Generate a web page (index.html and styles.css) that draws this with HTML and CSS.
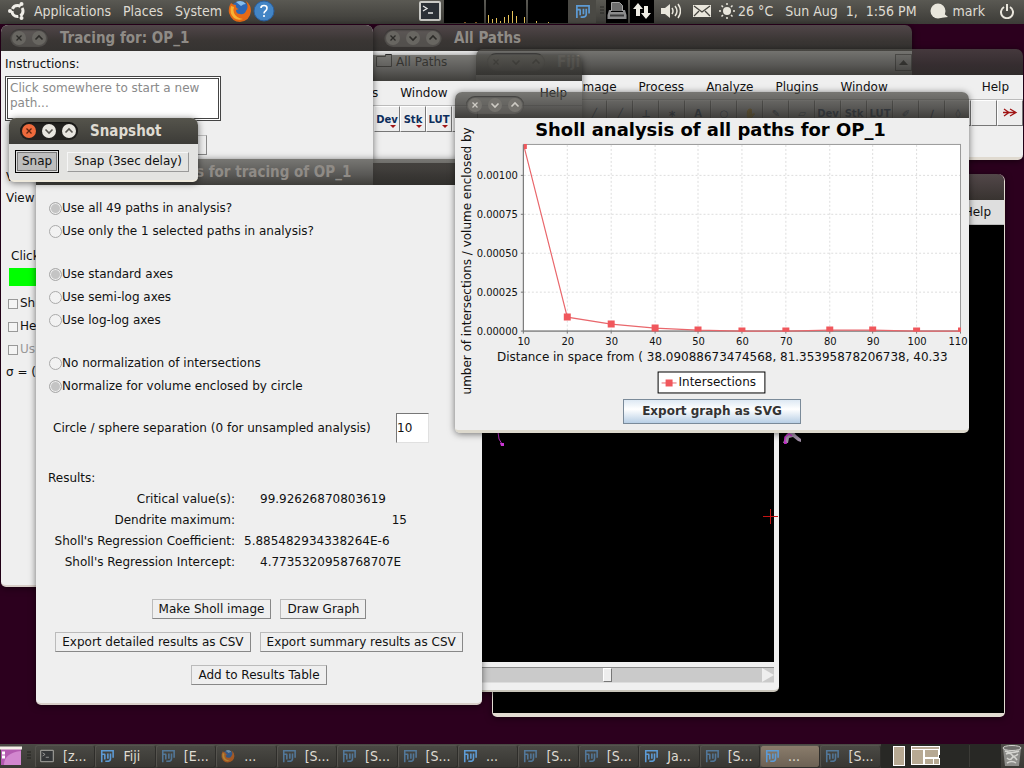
FILE: index.html
```html
<!DOCTYPE html>
<html lang="en">
<head>
<meta charset="utf-8">
<title>Sholl analysis desktop</title>
<link rel="stylesheet" href="styles.css">
</head>
<body>
<svg class="defs" aria-hidden="true">
  <symbol id="fiji" viewBox="0 0 16 16"><g fill="none" stroke="currentColor" stroke-width="1.800"><path d="M2 15V2H15V10"/><path d="M2 6H6M5.500 6V12M9 5V11M12 5V11Q12 14 8 14H6"/></g></symbol>
  <symbol id="x" viewBox="0 0 14 14"><path d="M4.500 4.500l5 5M9.500 4.500l-5 5" fill="none" stroke="currentColor" stroke-width="1.300"/></symbol>
  <symbol id="dn" viewBox="0 0 14 14"><path d="M3.500 5.500L7 9l3.500-3.500" fill="none" stroke="currentColor" stroke-width="1.600"/></symbol>
  <symbol id="up" viewBox="0 0 14 14"><path d="M3.500 8.500L7 5l3.500 3.500" fill="none" stroke="currentColor" stroke-width="1.600"/></symbol>
  <symbol id="term" viewBox="0 0 22 20"><rect x="1" y="1" width="20" height="18" rx="1" fill="#2b3036" stroke="#c9c9c5" stroke-width="2"/><path d="M4 5l4 2.500-4 2.500M9 12h5" fill="none" stroke="#e8e8e8" stroke-width="1.300"/></symbol>
  <symbol id="ff" viewBox="0 0 24 24"><circle cx="12" cy="11" r="9" fill="#2d67b5"/><path d="M8 3q6-3 10 2q-3 0-5 2z" fill="#86bdec"/><path d="M3 4Q0 9 1 14Q4 23 12 23Q22 22 23 12Q23 6 18 2Q21 8 18 12Q16 16 12 15Q8 15 8 11L11 10Q7 9 8 6Q5 6 3 4z" fill="#e66a16"/><path d="M3 7Q1 14 6 19Q10 22 15 20Q8 19 6 14Q5 10 6 8z" fill="#f9b233"/></symbol>
</svg>

<header class="panel">
  <nav class="menus">
    <svg class="ubuntu" viewBox="0 0 18 18"><circle cx="9.500" cy="9" r="5.500" fill="none" stroke="#f0eee8" stroke-width="3" stroke-dasharray="9.500 2" stroke-dashoffset="4"/><g fill="#f0eee8"><circle cx="2" cy="9" r="2"/><circle cx="13.500" cy="2" r="2"/><circle cx="13.500" cy="16" r="2"/></g></svg>
    <a href="#">Applications</a><a href="#">Places</a><a href="#">System</a>
    <svg class="launch" viewBox="0 0 24 24"><use href="#ff"/></svg>
    <svg class="launch help" viewBox="0 0 22 22"><circle cx="11" cy="11" r="10" fill="#4385c5" stroke="#2a5f9e"/><path d="M8 8Q8 5.500 11 5.500T14 8Q14 10 12.500 11T11 13.500M11 15v2" fill="none" stroke="#fff" stroke-width="1.600"/></svg>
  </nav>
  <div class="tray">
    <svg width="22" height="20"><use href="#term"/></svg>
    <svg class="monitor" viewBox="0 0 124 23"><path d="M0 0h40v23h-40zM42 0h40v23h-40zM84 0h40v23h-40z" fill="#000"/><path d="M44.500 23V15M48.500 23V19M52.500 23V18M56.500 23V21M60.500 23V17M64.500 23V15M68.500 23V11M72.500 23V16M80.500 23V17M92.500 23V21M104.500 23V22" stroke="#e7c35a"/><path d="M20 22.500h2M31 22.500h2" stroke="#875a24"/></svg>
    <span class="applet"><svg width="15" height="15"><use href="#fiji"/></svg></span>
    <svg width="8" height="10" viewBox="0 0 8 10"><path d="M2 1h4M2 4h4M2 7h4" stroke="#2b2a27" stroke-width="1"/></svg>
    <svg class="dark" width="22" height="24" viewBox="0 0 22 24"><path d="M5.500 12V3.500h8l3 3V12" fill="#6d6d6d" stroke="#a5a5a5"/><path d="M3 11h2v2h12v-2h2l1.500 5v4h-19v-4z" fill="#8c8c8c"/><path d="M4 16.500h14" stroke="#3a3a3a" stroke-width="2"/></svg>
    <svg class="dark" width="24" height="24" viewBox="0 0 24 24"><path d="M8 4l5 6h-3v7H6v-7H3zM16 20l-5-6h3V7h4v7h3z" fill="#eeece4"/></svg>
    <svg class="speaker" width="21" height="20" viewBox="0 0 21 20"><path d="M1 7h4l5-4v14l-5-4H1z" fill="#e9e6dc"/><path d="M12 7q2 3 0 6M15 5q4 5 0 10M18 3q5 7 0 14" fill="none" stroke="#e9e6dc" stroke-width="1.500"/></svg>
    <svg class="mail" width="18" height="14" viewBox="0 0 18 14"><path d="M0 1h18v12H0z" fill="#e9e6dc"/><path d="M1 2l8 6 8-6M1 12l5-5M17 12l-5-5" fill="none" stroke="#45443f" stroke-width="1.300"/></svg>
    <svg class="sun" width="16" height="16" viewBox="0 0 16 16"><circle cx="8" cy="8" r="4" fill="#e9e6dc"/><path d="M8 0v2M8 14v2M0 8h2M14 8h2M2.500 2.500l1.500 1.500M12 12l1.500 1.500M2.500 13.500L4 12M12 4l1.500-1.500" stroke="#e9e6dc" stroke-width="1.500"/></svg>
    <span class="temp">26 °C</span><time>Sun Aug&nbsp; 1,&nbsp; 1:56 PM</time>
    <svg width="18" height="16" viewBox="0 0 18 16"><circle cx="8" cy="8" r="7.500" fill="#e9e6dc"/><path d="M12 9l6 5-8 1z" fill="#e9e6dc"/></svg>
    <span class="user">mark</span>
    <svg width="14" height="16" viewBox="0 0 14 16"><path d="M4 4a6 6 0 1 0 6 0M7 1v7" fill="none" stroke="#e9e6dc" stroke-width="2"/></svg>
  </div>
</header>

<main class="desktop">
  <section class="win w-image">
    <div class="bar"></div>
    <nav class="menubar end"><a href="#">Help</a></nav>
    <div class="black"><svg class="neurite" viewBox="0 0 22 16"><path d="M1 12l3-8 4-4h3l3 4 5 4v3l-3-1-5-4-4 1-1 5z" fill="#a08fa6"/><path d="M3 13V6l4-3 3 2M2 12h3" stroke="#c92bd0" stroke-width="1.500" fill="none"/></svg></div>
  </section>

  <section class="win w-canvas">
    <div class="bar"></div>
    <div class="black">
      <svg class="tail" viewBox="0 0 10 16"><path d="M2 0q0 8 4 12" stroke="#b62bc0" fill="none"/><path d="M4 11h4v3H5z" fill="#c936d2"/></svg>
      <svg class="cross" viewBox="0 0 15 15"><path d="M7.500 0v15M0 7.500h15" stroke="#c41414"/></svg>
    </div>
    <div class="scroll"><span class="thumb"></span><button class="arrow" aria-label="Scroll right"></button></div>
  </section>

  <section class="win w-paths">
    <div class="bar"><span class="ctl"><button aria-label="Close"><svg><use href="#x"/></svg></button><button aria-label="Minimize"><svg><use href="#dn"/></svg></button><button aria-label="Maximize"><svg><use href="#up"/></svg></button></span><h2>All Paths</h2></div>
    <div class="tree"><svg width="16" height="13" viewBox="0 0 16 13"><path d="M.5 12.500v-10h9v-2h6v12z" fill="none" stroke="#333"/></svg><span>All Paths</span><button class="sbtn" aria-label="Scroll up"><svg width="9" height="5" viewBox="0 0 9 5"><path d="M0 5l4.500-5L9 5z" fill="#111"/></svg></button></div>
  </section>

  <section class="win w-fiji">
    <div class="bar"><span class="ctl"><button aria-label="Close"><svg><use href="#x"/></svg></button><button aria-label="Minimize"><svg><use href="#dn"/></svg></button><button aria-label="Maximize"><svg><use href="#up"/></svg></button></span><h2>Fiji</h2></div>
    <nav class="menubar"><a href="#">Image</a><a href="#">Process</a><a href="#">Analyze</a><a href="#">Plugins</a><a href="#">Window</a><a href="#" class="last">Help</a></nav>
    <div class="tools right">
      <button>╱</button><button>╱</button><button>⊥</button><button>∗</button><button>A</button><button>○</button><button>✋</button><button>✎</button><button>▱</button><button>Dev</button><button>Stk</button><button>LUT</button><button>✐</button><button>∕</button><button>◊</button><button aria-label="Empty tool"></button><button class="more" aria-label="More tools"><svg width="15" height="9" viewBox="0 0 15 9"><path d="M1 1l5 3.500L1 8M7 1l6 3.500L7 8M0 4.500h13" fill="none" stroke="#a01515" stroke-width="1.300"/></svg></button>
    </div>
  </section>

  <section class="win w-fiji2">
    <div class="bar"></div>
    <nav class="menubar"><span>s</span><a href="#">Window</a><a href="#" class="last">Help</a></nav>
    <div class="tools"><button class="drop">Dev</button><button class="drop">Stk</button><button class="drop">LUT</button><button aria-label="Tool"></button></div>
  </section>

  <section class="win w-trace">
    <div class="bar"><span class="ctl"><button aria-label="Close"><svg><use href="#x"/></svg></button><button aria-label="Maximize"><svg><use href="#up"/></svg></button></span><h2>Tracing for: OP_1</h2></div>
    <form class="trace">
      <label for="ins">Instructions:</label>
      <textarea id="ins" readonly>Click somewhere to start a new path...</textarea>
      <button type="button" class="awt blank" aria-label="Cancel"></button>
      <span class="line v">V</span>
      <span class="line view">View</span>
      <span class="line click">Click</span>
      <span class="green"></span>
      <label class="check"><input type="checkbox">Sh</label>
      <label class="check"><input type="checkbox">He</label>
      <label class="check off"><input type="checkbox" disabled>Us</label>
      <span class="line">σ = (</span>
    </form>
  </section>

  <section class="win w-sholl">
    <div class="bar"><h2>s for tracing of OP_1</h2></div>
    <form class="sholl">
      <div class="group">
        <label><input type="radio" name="p" checked>Use all 49 paths in analysis?</label>
        <label><input type="radio" name="p">Use only the 1 selected paths in analysis?</label>
      </div>
      <div class="group">
        <label><input type="radio" name="a" checked>Use standard axes</label>
        <label><input type="radio" name="a">Use semi-log axes</label>
        <label><input type="radio" name="a">Use log-log axes</label>
      </div>
      <div class="group">
        <label><input type="radio" name="n">No normalization of intersections</label>
        <label><input type="radio" name="n" checked>Normalize for volume enclosed by circle</label>
      </div>
      <div class="sep"><label for="sep">Circle / sphere separation (0 for unsampled analysis)</label><input id="sep" type="text" value="10"></div>
      <table class="results">
        <caption>Results:</caption>
        <tr><th>Critical value(s):</th><td class="mid">99.92626870803619</td></tr>
        <tr><th>Dendrite maximum:</th><td class="far">15</td></tr>
        <tr><th>Sholl's Regression Coefficient:</th><td>5.885482934338264E-6</td></tr>
        <tr><th>Sholl's Regression Intercept:</th><td class="mid">4.7735320958768707E</td></tr>
      </table>
      <div class="actions">
        <div><button type="button" class="awt">Make Sholl image</button><button type="button" class="awt">Draw Graph</button></div>
        <div><button type="button" class="awt">Export detailed results as CSV</button><button type="button" class="awt">Export summary results as CSV</button></div>
        <div><button type="button" class="awt">Add to Results Table</button></div>
      </div>
    </form>
  </section>

  <section class="win w-snap focus">
    <div class="bar"><span class="ctl"><button class="close" aria-label="Close"><svg><use href="#x"/></svg></button><button aria-label="Minimize"><svg><use href="#dn"/></svg></button><button aria-label="Maximize"><svg><use href="#up"/></svg></button></span><h2>Snapshot</h2></div>
    <div class="snap"><button class="awt pressed">Snap</button><button class="awt raised">Snap (3sec delay)</button></div>
  </section>

  <section class="win w-graph">
    <div class="bar"><span class="ctl"><button aria-label="Close"><svg><use href="#x"/></svg></button><button aria-label="Minimize"><svg><use href="#dn"/></svg></button><button aria-label="Maximize"><svg><use href="#up"/></svg></button></span></div>
    <div class="graph">
      <svg class="chart" viewBox="0 0 515 280">
        <defs><clipPath id="plot"><rect x="69" y="26" width="438" height="189"/></clipPath></defs>
        <text class="ctitle" x="256" y="18">Sholl analysis of all paths for OP_1</text>
        <rect x="68.500" y="26.500" width="438" height="187" fill="#fff" stroke="#999"/>
        <path class="grid" d="M112.500 27V213M156.500 27V213M200.500 27V213M243.500 27V213M287.500 27V213M331.500 27V213M375.500 27V213M418.500 27V213M462.500 27V213M69 57.500H506M69 96.500H506M69 135.500H506M69 174.500H506"/>
        <path d="M68.500 27V213.500H507M66 57.500h3M66 96.500h3M66 135.500h3M66 174.500h3M66 213.500h3M68.500 213v3M112.500 213v3M156.500 213v3M200.500 213v3M243.500 213v3M287.500 213v3M331.500 213v3M375.500 213v3M418.500 213v3M462.500 213v3M506.500 213v3" stroke="#777" fill="none"/>
        <g clip-path="url(#plot)"><path d="M69 28L112.500 199.500 156.500 206.500 200.500 210.500 243.500 212.500 287.500 213.500H331.500L375.500 212.500H418.500L462.500 213.500H507" fill="none" stroke="#e9676c" stroke-width="1.200"/>
        <path d="M66 25h6v6h-6zM109 196h7v7h-7zM153 203h7v7h-7zM197 207h7v7h-7zM240 209h7v5h-7zM284 210h7v4h-7zM328 210h7v4h-7zM372 209h7v5h-7zM415 209h7v5h-7zM459 210h7v4h-7zM504 210h7v4h-7z" fill="#f0575c"/></g>
        <g class="yt"><text x="63" y="61">0.00100</text><text x="63" y="100">0.00075</text><text x="63" y="139">0.00050</text><text x="63" y="178">0.00025</text><text x="63" y="217">0.00000</text></g>
        <g class="xt"><text x="69" y="227">10</text><text x="113" y="227">20</text><text x="157" y="227">30</text><text x="201" y="227">40</text><text x="244" y="227">50</text><text x="288" y="227">60</text><text x="332" y="227">70</text><text x="376" y="227">80</text><text x="419" y="227">90</text><text x="463" y="227">100</text><text x="504" y="227">110</text></g>
        <text class="lab" x="42" y="243">Distance in space from ( 38.09088673474568, 81.35395878206738, 40.33</text>
        <text class="lab" transform="translate(16 277) rotate(-90)">umber of intersections / volume enclosed by</text>
        <g><rect x="203.500" y="254.500" width="107" height="21" fill="#fff" stroke="#000"/><path d="M207 265.500h15" stroke="#e9676c"/><path d="M211 262h7v7h-7z" fill="#f0575c"/><text class="lab" x="224" y="269">Intersections</text></g>
      </svg>
      <button class="export">Export graph as SVG</button>
    </div>
  </section>
</main>

<footer class="taskbar">
  <svg width="22" height="20" viewBox="0 0 22 20"><rect x="1" y="1" width="20" height="18" fill="#b35ab0"/><path d="M4 19q0-12 17-14v14z" fill="#d287cf"/><path d="M0 2h22" stroke="#f4efe8" stroke-width="3"/><path d="M2 7h3M2 11h3" stroke="#fff" stroke-width="3"/></svg>
  <svg class="grip" width="6" height="10" viewBox="0 0 6 10"><path d="M1 1h4M1 4h4M1 7h4" stroke="#23221f"/></svg>
  <div class="tasks">
    <button class="dim"><svg><use href="#term"/></svg>[z...</button>
    <button><svg><use href="#fiji"/></svg>Fiji</button>
    <button class="dim"><svg><use href="#fiji"/></svg>[E...</button>
    <button class="dim"><svg><use href="#ff"/></svg>...</button>
    <button class="dim"><svg><use href="#fiji"/></svg>[S...</button>
    <button class="dim"><svg><use href="#fiji"/></svg>[S...</button>
    <button class="dim"><svg><use href="#fiji"/></svg>[S...</button>
    <button><svg><use href="#fiji"/></svg>...</button>
    <button class="dim"><svg><use href="#fiji"/></svg>[S...</button>
    <button class="dim"><svg><use href="#fiji"/></svg>[S...</button>
    <button><svg><use href="#fiji"/></svg>Ja...</button>
    <button class="dim"><svg><use href="#fiji"/></svg>[S...</button>
    <button class="active"><svg><use href="#fiji"/></svg>...</button>
    <button class="dim"><svg><use href="#fiji"/></svg>[S...</button>
  </div>
  <svg class="pager" viewBox="0 0 120 24"><rect width="120" height="24" fill="#282825"/><path d="M88.500 1v22" stroke="#3b3a36"/><g fill="#b7a993" stroke="#fff"><rect x="12.500" y="2.500" width="11" height="19"/><rect x="30.500" y="2.500" width="28" height="8"/><rect x="30.500" y="5.500" width="12" height="15"/><rect x="43.500" y="5.500" width="14" height="8"/><rect x="43.500" y="14.500" width="9" height="6"/><rect x="52.500" y="14.500" width="6" height="6"/></g></svg>
  <svg class="trash" width="22" height="24" viewBox="0 0 22 24"><path d="M2 4l18 0-2 18H4z" fill="#8d8d8a"/><ellipse cx="11" cy="4" rx="9" ry="2.500" fill="#6e6e6b" stroke="#d2d2ce"/><path d="M5 10q4-2 6 1t6-1M6 14q3 3 5 0t5 2M6 19q5-3 9 0M4 7q7 3 14 0" stroke="#d4d4d0" stroke-width="1.500" fill="none"/></svg>
</footer>
</body>
</html>
```
FILE: styles.css
```css
* { box-sizing: border-box; }
body {
  margin: 0;
  height: 100vh;
  display: flex;
  flex-direction: column;
  overflow: hidden;
  background: #2c001e;
  font: 12px/15px "DejaVu Sans", sans-serif;
  color: #111;
}
button, input, textarea { font: inherit; color: inherit; margin: 0; padding: 0; }
a { color: inherit; text-decoration: none; }
h2 { margin: 0; font-size: 15px; line-height: 20px; font-weight: bold; }
.defs { position: absolute; width: 0; height: 0; }

.panel, .taskbar, .bar h2 { font-family: "DejaVu Sans Condensed", "DejaVu Sans", sans-serif; }
.panel {
  display: flex;
  justify-content: space-between;
  align-items: center;
  height: 24px;
  flex: none;
  padding: 0 10px 2px 8px;
  background: linear-gradient(#5a5953, #3c3b37);
  color: #dfdbd2;
  font-size: 14px;
  line-height: 20px;
  white-space: nowrap;
}
.menus, .tray { display: flex; align-items: center; }
.menus { gap: 12px; }
.ubuntu { width: 18px; height: 18px; margin-right: -4px; }
.launch { width: 24px; height: 24px; margin-left: -6px; }
.help { width: 22px; height: 22px; margin-left: -11px; }
.monitor { width: 124px; height: 23px; margin-left: 3px; }
.applet { display: flex; align-items: center; justify-content: center; width: 28px; height: 24px; background: #4a4944; color: #5d9bd5; margin-right: 2px; }
.dark { background: #000; margin-right: 2px; }
.speaker { margin-left: 4px; }
.mail { margin: 0 8px 0 12px; }
.temp { margin: 0 12px 0 3px; }
.tray time { margin-right: 13px; }
.user { margin: 0 15px 0 5px; }

.desktop { position: relative; flex: 1; min-height: 0; }
.win {
  position: absolute;
  display: flex;
  flex-direction: column;
  border-radius: 7px 7px 5px 5px;
  box-shadow: 0 1px 7px rgba(0, 0, 0, .55);
}
.bar {
  display: flex;
  align-items: center;
  gap: 12px;
  height: 26px;
  flex: none;
  padding: 0 11px;
  border-radius: 7px 7px 0 0;
  background: linear-gradient(rgba(78, 77, 72, .74), rgba(56, 55, 52, .82) 60%, rgba(48, 47, 44, .92));
  color: #8f8b86;
  white-space: nowrap;
}
.ctl { display: flex; gap: 4px; padding: 1px; border-radius: 9px; background: rgba(110, 108, 104, .5); box-shadow: inset 0 1px 2px rgba(0, 0, 0, .5); }
.ctl button { width: 14px; height: 14px; margin: 1px; border: 0; border-radius: 50%; background: #686661; color: #2c2b28; }
.w-graph .ctl button { background: #74726d; color: #cfccc5; }
.ctl svg { display: block; width: 14px; height: 14px; }
.focus .bar { background: linear-gradient(#55544c, #3c3b37); color: #dfdbd2; }
.focus .ctl { background: #22211f; }
.focus .ctl button { background: #e8e6e0; color: #55534e; }
.focus .ctl .close { background: #ee6a3c; color: #5c2410; }

.menubar { display: flex; align-items: center; height: 25px; flex: none; padding-top: 1px; background: #efefef; border-bottom: 1px solid #bbb; }
.menubar.end { justify-content: flex-end; padding-right: 13px; background: #dedede; }
.menubar .last { margin-left: auto; }
.black { position: relative; flex: 1; background: #000; }
.tools { display: flex; height: 26px; flex: none; overflow: hidden; background: #ececec; }
.tools.right { justify-content: flex-end; }
.tools button {
  width: 26px;
  flex: none;
  border: 1px solid;
  border-color: #fff #777 #777 #fff;
  background: #ededed;
  color: #0c2e5c;
  font-size: 10px;
  font-weight: bold;
}
.tools .drop { position: relative; }
.tools .drop::after { content: ""; position: absolute; right: 3px; bottom: 3px; border: 3px solid transparent; border-top-color: #a01515; border-bottom: 0; }

.w-image { left: 492px; top: 150px; width: 513px; height: 543px; border: solid #e2dcd2; border-width: 0 1px 4px; }
.w-image .bar, .w-canvas .bar { background: linear-gradient(#524749, #383330); }
.neurite { position: absolute; left: 289px; top: 206px; width: 22px; height: 16px; }
.w-canvas { left: 200px; top: 135px; width: 579px; height: 533px; background: #f0f0f0; border-bottom: 2px solid #c9c5ba; }
.w-canvas .black { margin-right: 5px; }
.tail { position: absolute; left: 296px; top: 247px; width: 10px; height: 16px; }
.cross { position: absolute; right: -4px; bottom: 138px; width: 15px; height: 15px; }
.scroll { display: flex; justify-content: flex-end; gap: 150px; height: 16px; flex: none; margin: 5px 5px 7px 0; background: #cacaca; border-top: 1px solid #888; border-bottom: 1px solid #ddd; }
.thumb { width: 9px; background: #eee; border: 1px solid; border-color: #fff #777 #777 #fff; }
.arrow { width: 12px; border: 0; background: #eee; clip-path: polygon(0 0, 100% 50%, 0 100%); }

.w-paths { left: 373px; top: 1px; width: 539px; height: 122px; }
.w-paths .bar, .w-trace .bar { background: linear-gradient(#514649, #3a3634 60%, #353331); }
.tree { display: flex; align-items: flex-start; gap: 4px; flex: 1; padding: 3px 0 0 3px; background: #efefef; color: #000; }
.tree span { padding-top: 1px; }
.sbtn { width: 17px; height: 17px; margin-left: auto; display: flex; align-items: center; justify-content: center; background: #ddd; border: 1px solid #555; }

.w-fiji { left: 476px; top: 25px; width: 547px; }
.w-fiji::after { content: ""; height: 31px; background: #efefef; border-bottom: 3px solid #e0dad0; border-radius: 0 0 5px 5px; }
.w-fiji .menubar { padding-left: 103px; padding-right: 14px; gap: 22px; }
.w-fiji2 { left: 34px; top: 31px; width: 548px; }
.w-fiji2::after { content: ""; height: 31px; background: #efefef; }
.w-fiji2 .menubar { padding-left: 338px; padding-right: 15px; gap: 22px; }
.w-fiji2 .tools { padding-left: 340px; }

.w-trace { left: 1px; top: 1px; width: 372px; height: 562px; background: #efefef; border-bottom: 2px solid #d8cfc9; }
.w-trace .bar { padding: 0 9px; }
.trace { display: flex; flex-direction: column; align-items: flex-start; padding: 6px 4px; }
.trace textarea { width: 216px; height: 45px; margin-top: 4px; padding: 2px; border: 3px double #444; background: #fff; color: #8a8a8a; resize: none; overflow: hidden; outline: 0; }
.blank { width: 60px; height: 20px; margin: 14px 0 15px 142px; }
.line { padding-left: 1px; }
.view { margin: 6px 0; }
.click { margin: 37px 0 4px; padding-left: 6px; }
.green { width: 120px; height: 18px; margin: 0 0 10px 4px; background: #0f0; }
.check { display: flex; align-items: center; gap: 2px; height: 15px; margin: 0 0 8px 3px; }
.check input { appearance: none; width: 10px; height: 10px; border: 1px solid #999; background: #f4f4f4; }
.off { color: #999; }

.w-sholl { left: 36px; top: 135px; width: 446px; }
.w-sholl .bar { padding-left: 160px; }
.sholl { display: flex; flex-direction: column; padding: 12px 12px 18px; background: #efefef; border-bottom: 2px solid #d8cfc9; border-radius: 0 0 5px 5px; }
.group { display: flex; flex-direction: column; margin-bottom: 20px; }
.group label { display: flex; align-items: center; height: 23px; }
.group input { appearance: none; width: 13px; height: 13px; margin-left: 1px; border: 1px solid #aaa; border-radius: 50%; background: #f2f2f2; }
.group input:checked { background: #c4c4c4; box-shadow: inset 0 0 0 1px #eee; }
.sep { display: flex; align-items: center; padding-left: 5px; margin-top: -5px; }
.sep label { width: 343px; }
.sep input { width: 33px; height: 30px; border: 1px solid; border-color: #777 #e0e0e0 #e0e0e0 #777; background: #fff; }
.results { border-collapse: collapse; align-self: flex-start; margin-top: 25px; }
.results caption { text-align: left; padding: 3px 0; }
.results th { width: 187px; font-weight: normal; text-align: right; padding: 3px 0; white-space: nowrap; }
.results td { width: 172px; padding: 3px 0 3px 9px; }
.results .mid { padding-left: 25px; }
.results .far { text-align: right; }
.actions { display: flex; flex-direction: column; align-items: center; gap: 13px; margin: 26px 0 0; }
.actions div { display: flex; gap: 9px; }
.awt { height: 20px; padding: 0 6px; border: 1px solid; border-color: #bbb #888 #888 #bbb; background: #efefef; white-space: nowrap; }

.w-snap { left: 9px; top: 94px; width: 189px; background: #e3e3e1; border-bottom: 2px solid #eee9dc; }
.snap { display: flex; align-items: center; gap: 8px; padding: 6px 6px 7px; }
.snap .pressed { height: 23px; background: #bdbdbd; border: 1px solid #000; box-shadow: inset 0 0 0 1px #ddd, inset 0 0 0 2px #777; }
.snap .raised { border-color: #f6f6f6 #999 #999 #f6f6f6; background: #e3e3e1; }

.w-graph { left: 455px; top: 68px; width: 514px; }
.graph { display: flex; flex-direction: column; align-items: center; padding-bottom: 6px; background: #eee; border-bottom: 3px solid #ddd9cd; border-radius: 0 0 5px 5px; }
.chart { display: block; width: 100%; font-family: "DejaVu Sans", sans-serif; fill: #111; }
.ctitle { font-size: 18px; font-weight: bold; text-anchor: middle; fill: #000; }
.grid { stroke: #ddd; stroke-dasharray: 2 2; fill: none; }
.yt, .xt { font-size: 10px; }
.yt { text-anchor: end; }
.xt { text-anchor: middle; }
.lab { font-size: 12px; }
.export { width: 178px; height: 25px; margin-top: 2px; border: 1px solid #7a8a99; background: linear-gradient(#dde8f3, #fff 40%, #b8cfe5); color: #333; font-weight: bold; }

.taskbar { display: flex; align-items: center; height: 24px; flex: none; background: linear-gradient(#4a4944, #3a3935); color: #dfdbd2; font-size: 14px; }
.grip { margin: 0 3px 0 4px; }
.tasks { display: flex; flex: 1; min-width: 0; }
.tasks button {
  display: flex;
  align-items: center;
  gap: 9px;
  flex: 1;
  min-width: 0;
  height: 23px;
  padding: 0 4px;
  border: 1px solid;
  border-color: #55534e #2e2d2a #2e2d2a #55534e;
  border-radius: 3px;
  background: linear-gradient(#4a4944, #383733);
  color: #dfdbd2;
  white-space: nowrap;
}
.tasks svg { width: 14px; height: 14px; flex: none; color: #5d9bd5; }
.tasks .dim svg { opacity: .6; }
.tasks .active { background: linear-gradient(#8a7c6b, #6c6154); }
.pager { width: 120px; height: 24px; flex: none; }
.trash { flex: none; margin-right: 1px; }
```
